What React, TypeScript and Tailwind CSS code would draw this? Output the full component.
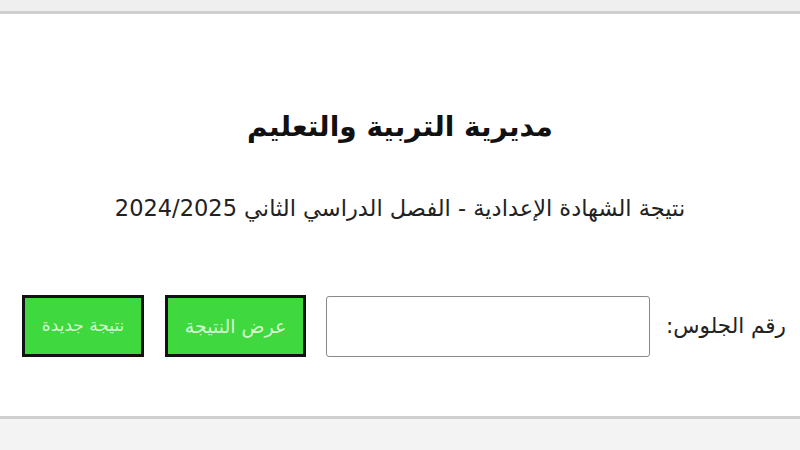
export default function App() {
  return (
    <div
      dir="rtl"
      className="w-[800px] h-[450px] flex flex-col bg-[#f2f2f2] overflow-hidden"
      style={{ fontFamily: '"DejaVu Sans", "Noto Sans", sans-serif' }}
    >
      {/* top strip */}
      <div className="h-[11px] bg-[#efefef]" />
      <main className="h-[408px] bg-white border-y-[3px] border-[#cfcfcf] flex flex-col items-center">
        <h1 className="mt-[93px] text-[28px] leading-[40px] font-bold text-[#111]">مديرية التربية والتعليم</h1>
        <p className="mt-[46px] text-[22.5px] leading-[30px] text-[#222]">
          نتيجة الشهادة الإعدادية - الفصل الدراسي الثاني 2024/2025
        </p>

        {/* search row */}
        <div className="mt-[72px] w-full flex items-center pr-[14px]">
          <label className="text-[21.5px] text-[#222] ml-[16px]">رقم الجلوس:</label>
          <input
            type="text"
            className="w-[324px] h-[61px] border-[1.5px] border-[#8a8a8a] rounded-[3px] bg-white ml-[20px] outline-none"
          />
          <button className="w-[141px] h-[62px] bg-[#3fd83f] border-[3px] border-[#111] text-[#d6f7d2] text-[19px] ml-[21px]">
            عرض النتيجة
          </button>
          <button className="w-[122px] h-[62px] bg-[#3fd83f] border-[3px] border-[#111] text-[#d6f7d2] text-[17px]">
            نتيجة جديدة
          </button>
        </div>
      </main>
      <div className="flex-1 bg-[#f3f3f3]" />
    </div>
  );
}
